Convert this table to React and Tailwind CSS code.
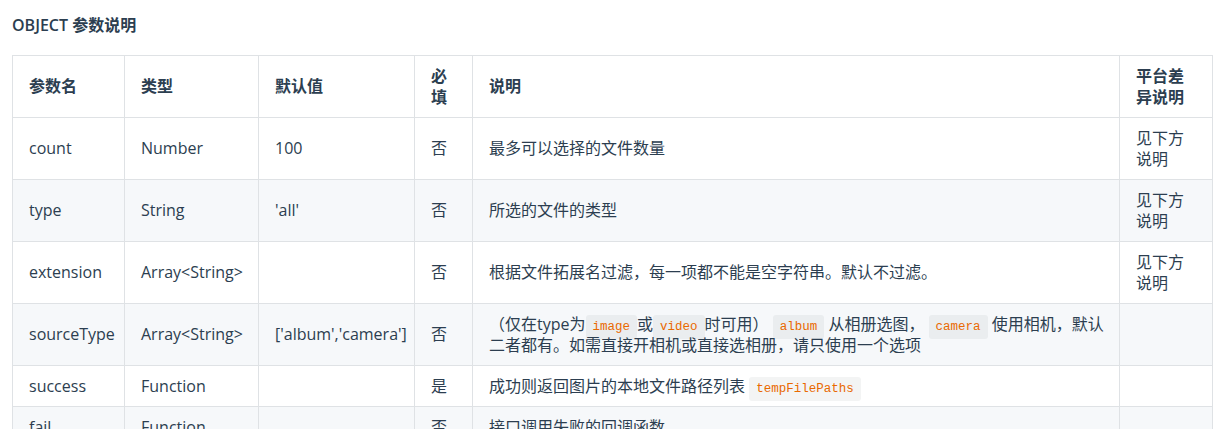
import React from "react";

const Code = ({ children }) => (
  <code className="rounded-[3px] bg-[rgba(27,31,35,0.05)] px-[7px] py-[5px] font-['Liberation_Mono',monospace] text-[12.5px] leading-none text-[#e96900]">
    {children}
  </code>
);

const rows = [
  { name: "count", type: "Number", def: "100", req: "否", desc: "最多可以选择的文件数量", diff: "见下方说明" },
  { name: "type", type: "String", def: "'all'", req: "否", desc: "所选的文件的类型", diff: "见下方说明" },
  { name: "extension", type: "Array<String>", def: "", req: "否", desc: "根据文件拓展名过滤，每一项都不能是空字符串。默认不过滤。", diff: "见下方说明" },
  {
    name: "sourceType",
    type: "Array<String>",
    def: "['album','camera']",
    req: "否",
    desc: (
      <>
        <span className="whitespace-nowrap">
          （仅在type为<Code>image</Code>或<Code>video</Code>时可用） <Code>album</Code> 从相册选图， <Code>camera</Code> 使用相机，默认
        </span>
        <br />
        二者都有。如需直接开相机或直接选相册，请只使用一个选项
      </>
    ),
    diff: ""
  },
  {
    name: "success",
    type: "Function",
    def: "",
    req: "是",
    desc: (
      <>
        成功则返回图片的本地文件路径列表 <Code>tempFilePaths</Code>
      </>
    ),
    diff: ""
  },
  { name: "fail", type: "Function", def: "", req: "否", desc: "接口调用失败的回调函数", diff: "" }
];

const cell = "border border-[#dfe2e5] px-[16px] py-[9.5px] align-middle";

export default function App() {
  return (
    <div className="min-h-screen bg-white px-[12px] pt-[15px] font-['Open_Sans','Noto_Sans_CJK_SC',sans-serif] text-[#2c3e50]">
      <h3 className="text-[16px] font-semibold leading-[20px]">OBJECT 参数说明</h3>

      {/* params table */}
      <table className="mt-[20px] w-[1200px] table-fixed border-collapse text-left text-[16px] leading-[21px]">
        <colgroup>
          <col className="w-[112px]" />
          <col className="w-[134px]" />
          <col className="w-[156px]" />
          <col className="w-[58px]" />
          <col className="w-[647px]" />
          <col className="w-[93px]" />
        </colgroup>
        <thead>
          <tr>
            <th className={`${cell} font-bold`}>参数名</th>
            <th className={`${cell} font-bold`}>类型</th>
            <th className={`${cell} font-bold`}>默认值</th>
            <th className={`${cell} font-bold`}>必填</th>
            <th className={`${cell} font-bold`}>说明</th>
            <th className={`${cell} font-bold`}>平台差异说明</th>
          </tr>
        </thead>
        <tbody>
          {rows.map((r, i) => (
            <tr key={r.name} className={i % 2 === 1 ? "bg-[#f6f8fa]" : "bg-white"}>
              <td className={cell}>{r.name}</td>
              <td className={cell}>{r.type}</td>
              <td className={cell}>{r.def}</td>
              <td className={cell}>{r.req}</td>
              <td className={cell}>{r.desc}</td>
              <td className={cell}>{r.diff}</td>
            </tr>
          ))}
        </tbody>
      </table>
    </div>
  );
}
